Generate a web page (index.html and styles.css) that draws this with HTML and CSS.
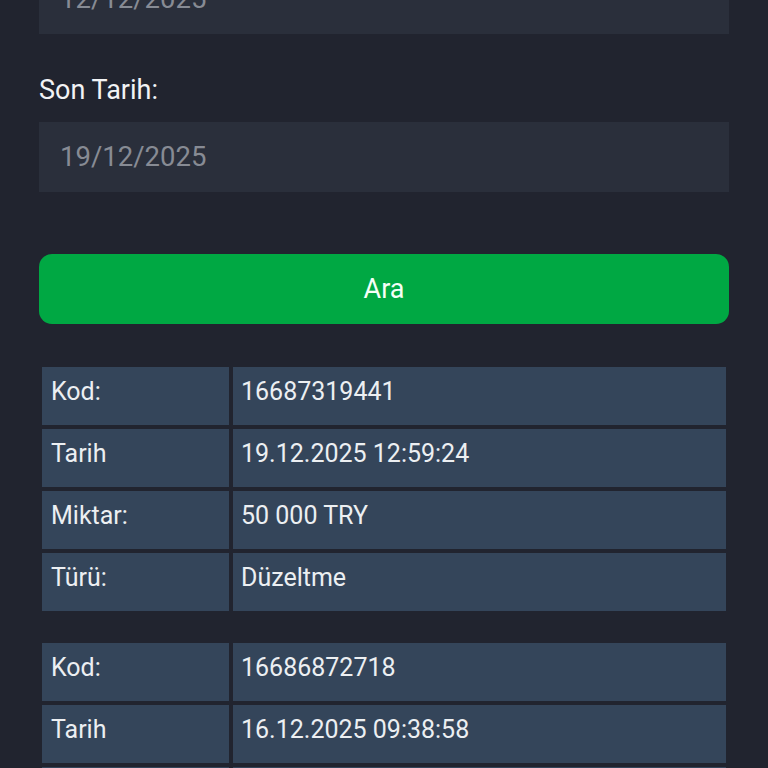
FILE: index.html
```html
<!DOCTYPE html>
<html lang="tr">
<head>
<meta charset="utf-8">
<title>İşlem Geçmişi</title>
<link rel="stylesheet" href="styles.css">
</head>
<body>
<div class="page">
  <div class="field first"><span class="field-text">12/12/2025</span></div>
  <label class="label">Son Tarih:</label>
  <div class="field"><span class="field-text">19/12/2025</span></div>
  <button class="search-btn">Ara</button>

  <div class="record">
    <div class="cell key">Kod:</div><div class="cell val">16687319441</div>
    <div class="cell key">Tarih</div><div class="cell val">19.12.2025 12:59:24</div>
    <div class="cell key">Miktar:</div><div class="cell val">50 000 TRY</div>
    <div class="cell key">Türü:</div><div class="cell val">Düzeltme</div>
  </div>

  <div class="record">
    <div class="cell key">Kod:</div><div class="cell val">16686872718</div>
    <div class="cell key">Tarih</div><div class="cell val">16.12.2025 09:38:58</div>
    <div class="cell key">Miktar:</div><div class="cell val">50 000 TRY</div>
    <div class="cell key">Türü:</div><div class="cell val">Düzeltme</div>
  </div>
</div>
</body>
</html>
```
FILE: styles.css
```css
html, body {
  margin: 0;
  padding: 0;
  background: #21242f;
  height: 100%;
  overflow: hidden;
}
body {
  font-family: Roboto, "Noto Sans", "Liberation Sans", sans-serif;
  color: #eef0f3;
}
.page {
  padding: 0 39px;
  margin-top: -36px;
  display: flex;
  flex-direction: column;
}
.field {
  height: 70px;
  background: #2a2f3b;
  display: flex;
  align-items: center;
  padding-left: 21px;
  box-sizing: border-box;
}
.field-text {
  font-size: 27.5px;
  color: #878b94;
  line-height: 32px;
}
.label {
  font-size: 27px;
  line-height: 32px;
  color: #f2f3f5;
  margin-top: 40px;
  margin-bottom: 16px;
}
.search-btn {
  margin-top: 62px;
  height: 70px;
  border: none;
  border-radius: 13px;
  background: #00a843;
  color: #f4fff7;
  font-family: Roboto, "Noto Sans", "Liberation Sans", sans-serif;
  font-size: 27px;
  padding: 0;
}
.record {
  margin: 43px 3px 0;
  display: grid;
  grid-template-columns: 187px 1fr;
  grid-auto-rows: 58px;
  gap: 4px;
}
.record + .record {
  margin-top: 32px;
}
.cell {
  background: #34455a;
  font-size: 25px;
  line-height: 30px;
  padding: 10px 9px 0;
  color: #eceff2;
}
.val {
  padding-left: 8px;
}
```
